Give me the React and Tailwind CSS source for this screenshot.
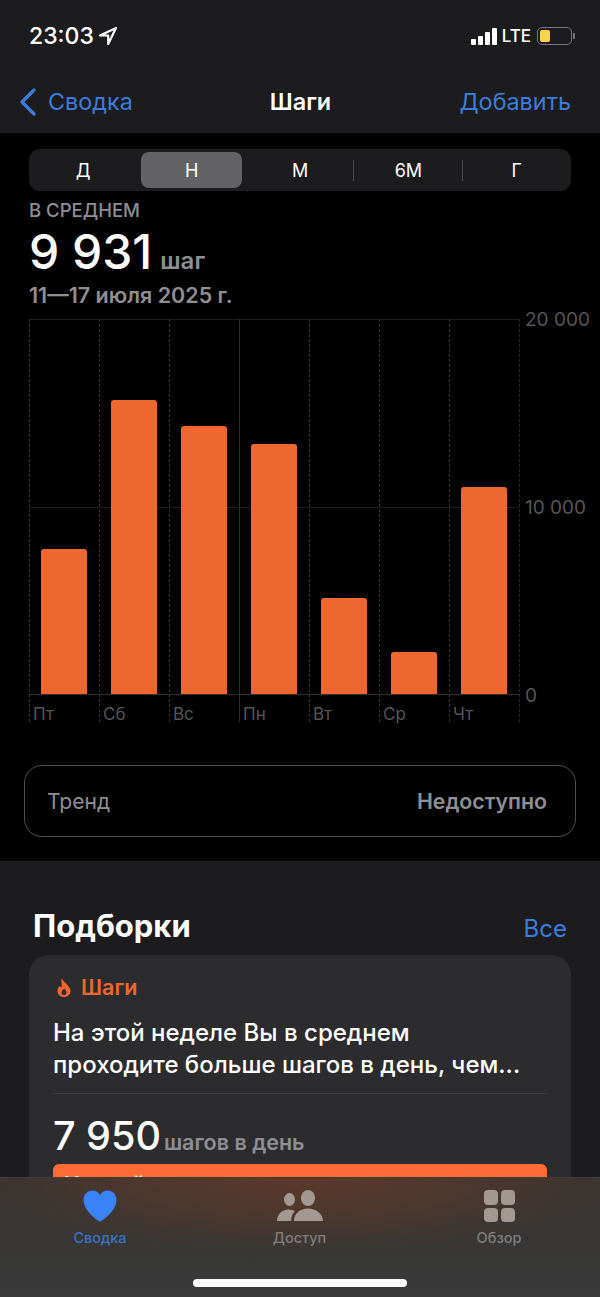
const days = [
  { label: 'Пт', top: 230 },
  { label: 'Сб', top: 81 },
  { label: 'Вс', top: 107 },
  { label: 'Пн', top: 125, solid: true },
  { label: 'Вт', top: 279 },
  { label: 'Ср', top: 333 },
  { label: 'Чт', top: 168 },
];

const ranges = ['Д', 'Н', 'М', '6М', 'Г'];

const StatusBar = () => (
  <div className="flex h-[72px] items-start justify-between pl-[29px] pr-[25px] pt-[21px]">
    <div className="flex items-center gap-[4px]">
      <span className="text-[23px] leading-[30px] font-medium text-white">23:03</span>
      <svg width="20" height="20" viewBox="0 0 20 20" fill="none" stroke="#fff" strokeWidth="2.2" strokeLinejoin="round">
        <path d="M18 2 2 9.5h8.2V18z" />
      </svg>
    </div>
    <div className="flex items-center pt-[6px]">
      <div className="flex items-end gap-[2px]">
        <div className="h-[6px] w-[5px] rounded-[1px] bg-white" />
        <div className="h-[9px] w-[5px] rounded-[1px] bg-white" />
        <div className="h-[13px] w-[5px] rounded-[1px] bg-white" />
        <div className="h-[17px] w-[5px] rounded-[1px] bg-white" />
      </div>
      <span className="ml-[5px] text-[17px] leading-[18px] font-medium text-white">LTE</span>
      <div className="ml-[6px] flex h-[18px] w-[35px] items-center rounded-[5px] border border-[#77777a] p-[2px]">
        <div className="h-full w-[10px] rounded-[2px] bg-[#f7d54a]" />
      </div>
      <div className="ml-[1px] h-[6px] w-[2px] rounded-r-[1px] bg-[#77777a]" />
    </div>
  </div>
);

const NavBar = () => (
  <div className="grid h-[61px] grid-cols-3 items-start pl-[19px] pr-[29px] pt-[15px] text-[23.4px] leading-[30px] text-[#3b7ddd]">
    <div className="flex items-center gap-[11px]">
      <svg width="18" height="28" viewBox="0 0 18 28" fill="none" stroke="#3b7ddd" strokeWidth="3.2" strokeLinecap="round" strokeLinejoin="round">
        <path d="M15 2 3 14l12 12" />
      </svg>
      <span>Сводка</span>
    </div>
    <span className="pl-[11px] text-center font-semibold text-white">Шаги</span>
    <span className="text-right">Добавить</span>
  </div>
);

const RangeTabs = () => (
  <div className="mx-[29px] mt-[16px] flex h-[42px] items-center rounded-[11px] bg-[#1c1c1f] text-[18px] text-white">
    {ranges.map((r, i) => (
      <div key={r} className="relative flex h-full flex-1 items-center justify-center">
        {i === 1 ? (
          <div className="flex h-[36px] w-[101px] items-center justify-center rounded-[8px] bg-[#636366]">{r}</div>
        ) : (
          <span>{r}</span>
        )}
        {(i === 2 || i === 3) && <div className="absolute right-0 top-[11px] h-[21px] w-px bg-[#48484a]" />}
      </div>
    ))}
  </div>
);

const Summary = () => (
  <div className="px-[29px] pt-[9px]">
    <div className="text-[18.5px] leading-[20px] font-medium text-[#8e8e93]">В СРЕДНЕМ</div>
    <div className="mt-[7px] flex items-baseline gap-[8px] leading-[50px]">
      <span className="text-[48px] font-medium text-white">9 931</span>
      <span className="text-[24px] font-semibold text-[#8e8e93]">шаг</span>
    </div>
    <div className="-mt-[4px] text-[21.500px] leading-[26px] font-semibold text-[#8e8e93]">11—17 июля 2025 г.</div>
  </div>
);

const Chart = () => (
  <div className="ml-[29px] mt-[11px] flex">
    <div className="relative flex w-[491px] border-r border-dashed border-[#2a2a2c]">
      <div className="absolute left-0 top-[188px] h-px w-full bg-[#1e1e20]" />
      {days.map((d) => (
        <div
          key={d.label}
          className={`w-[70px] shrink-0 border-l ${d.solid ? 'border-solid border-[#2e2e30]' : 'border-dashed border-[#303032]'}`}
        >
          <div className="flex h-[376px] items-end border-t border-b border-t-[#1c1c1e] border-b-[#2e2e30] pl-[11px]">
            <div style={{ height: 375 - d.top }} className="relative w-[46px] rounded-t-[3px] bg-[#ee6730]" />
          </div>
          <div className="h-[27px] pl-[3px] pt-[8px] text-[17px] leading-[22px] text-[#55555a]">{d.label}</div>
        </div>
      ))}
    </div>
    <div className="-mt-[11px] flex h-[400px] flex-col justify-between pl-[5px] text-[19px] leading-[24px] text-[#55555a]">
      <span>20 000</span>
      <span>10 000</span>
      <span>0</span>
    </div>
  </div>
);

const Trend = () => (
  <div className="mx-[24px] mt-[43px] flex h-[72px] items-center justify-between rounded-[18px] border border-[#4e4e52] pl-[22px] pr-[28px] pt-[2px] text-[#8e8e93]">
    <span className="text-[21px]">Тренд</span>
    <span className="text-[21.300px] font-semibold">Недоступно</span>
  </div>
);

const Picks = () => (
  <div className="mt-[24px] h-[500px] bg-[#1c1c1e] pt-[43px]">
    <div className="flex h-[44px] items-center justify-between px-[33px]">
      <span className="text-[31px] leading-[44px] font-bold text-white">Подборки</span>
      <span className="mt-[6px] text-[24px] leading-[32px] text-[#3b7ddd]">Все</span>
    </div>
    <div className="mx-[29px] mt-[7px] h-[400px] rounded-[20px] bg-[#2c2c2e] px-[24px] pt-[18px]">
      <div className="flex items-center gap-[10px] pl-[4px] text-[21.500px] leading-[28px] font-semibold text-[#ee6730]">
        <svg width="14" height="19" viewBox="0 0 14 19" fill="#ee6730">
          <path
            fillRule="evenodd"
            d="M5 0C5.500 3 8 4 10.500 7 12.500 9.300 13.500 11 13.500 13 13.500 16.500 10.500 19 7 19 3.500 19 0.500 16.500 0.500 13 0.500 10.500 1.800 9 3 7.800 3.200 8.800 3.800 9.500 4.500 9.500 5.500 7 3.500 3 5 0ZM7.200 10.500C6 12 4.500 13 4.500 15 4.500 16.200 5.600 17 7 17 8.400 17 9.500 16.200 9.500 15 9.500 13 8.200 12 7.200 10.500Z"
          />
        </svg>
        <span>Шаги</span>
      </div>
      <div className="mt-[16px] text-[24px] leading-[32px] font-medium text-white">
        На этой неделе Вы в среднем
        <br />
        проходите больше шагов в день, чем...
      </div>
      <div className="mt-[12px] h-px bg-[#3d3d40]" />
      <div className="mt-[17px] flex items-baseline gap-[3px] leading-[50px]">
        <span className="text-[39.500px] font-medium text-white">7 950</span>
        <span className="text-[21.500px] font-semibold text-[#8e8e93]">шагов в день</span>
      </div>
      <div className="-mt-[3px] h-[60px] rounded-t-[6px] bg-[#ff6b35] pl-[11px] pt-[5px] text-[21px] font-semibold text-white">
        На этой неделе
      </div>
    </div>
  </div>
);

const TabBar = () => (
  <div className="absolute bottom-0 left-0 flex h-[120px] w-full justify-between border-t border-[#3f3d3b] bg-[radial-gradient(ellipse_340px_76px_at_50%_0%,#5a392a,#50382d_40%,transparent_100%),linear-gradient(to_bottom,#353331,#3a3a3a)] pl-[73px] pr-[74px] pt-[12px] text-[14.500px] font-medium">
    <div className="flex w-[54px] flex-col items-center gap-[7px] text-[#3b72c9]">
      <svg width="34" height="32" viewBox="0 0 34 32" fill="#3a82f7">
        <path d="M17 31.500C15.500 31.500 0.500 21 0.500 10 0.500 4.500 4.500 0.500 9.500 0.500 12.700 0.500 15.500 2.200 17 5 18.500 2.200 21.300 0.500 24.500 0.500 29.500 0.500 33.500 4.500 33.500 10 33.500 21 18.500 31.500 17 31.500Z" />
      </svg>
      <span className="leading-[18px]">Сводка</span>
    </div>
    <div className="flex w-[54px] flex-col items-center gap-[7px] text-[#807d7b]">
      <svg width="46" height="32" viewBox="0 0 46 32" fill="#a39892">
        <ellipse cx="12.500" cy="9.500" rx="5.500" ry="6.500" />
        <ellipse cx="31" cy="8" rx="7" ry="8" />
        <path d="M0 31C0 24.500 5 19.500 11.500 19.500 14 19.500 16.200 20.200 17.800 21.300 15.300 23.800 14 27 14.200 31ZM17 31C17 24 22.800 18.500 31 18.500 39.200 18.500 46 24 46 31Z" />
      </svg>
      <span className="leading-[18px]">Доступ</span>
    </div>
    <div className="flex w-[54px] flex-col items-center gap-[7px] text-[#807d7b]">
      <div className="grid h-[32px] w-[31px] grid-cols-2 gap-[3px]">
        <div className="rounded-[4px] bg-[#a39892]" />
        <div className="rounded-[4px] bg-[#a39892]" />
        <div className="rounded-[4px] bg-[#a39892]" />
        <div className="rounded-[4px] bg-[#a39892]" />
      </div>
      <span className="leading-[18px]">Обзор</span>
    </div>
    <div className="absolute bottom-[10px] left-[193px] h-[8px] w-[214px] rounded-full bg-white" />
  </div>
);

const App = () => {
  return (
    <div className="relative h-[1297px] w-[600px] overflow-hidden bg-black font-['Inter',sans-serif]">
      <div className="h-[133px] bg-[#1c1c1e]">
        <StatusBar />
        <NavBar />
      </div>
      <RangeTabs />
      <Summary />
      <Chart />
      <Trend />
      <Picks />
      <TabBar />
    </div>
  );
};

export default App;
